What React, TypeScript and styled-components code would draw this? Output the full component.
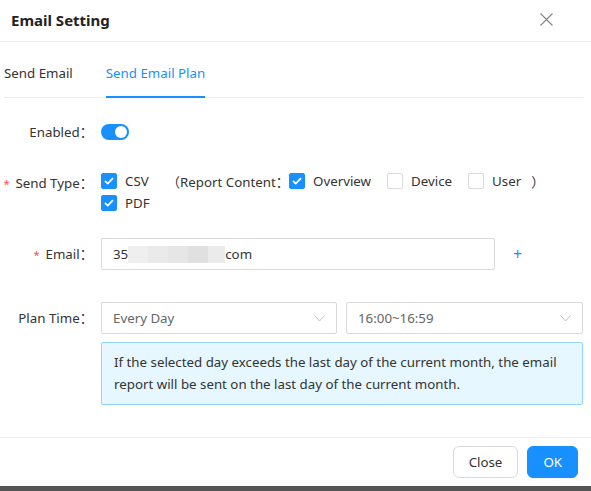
import React from "react";
import styled, { createGlobalStyle } from "styled-components";

const Global = createGlobalStyle`
  html, body { margin: 0; padding: 0; background: #fff; }
  body { font-family: "Noto Sans", "Noto Sans CJK SC", sans-serif; font-size: 13.3px; color: #333; }
  * { box-sizing: border-box; }
`;

const Modal = styled.div`
  width: 591px;
  height: 491px;
  display: flex;
  flex-direction: column;
  background: #fff;
  overflow: hidden;
`;

const Header = styled.div`
  height: 42px;
  flex: none;
  display: flex;
  align-items: center;
  justify-content: space-between;
  padding: 0 38px 2px 11px;
  border-bottom: 1px solid #eeeeee;
`;

const Title = styled.div`
  font-size: 15px;
  font-weight: 700;
  color: #222;
`;

const CloseX = styled.button`
  border: 0;
  background: none;
  padding: 0;
  width: 14px;
  height: 14px;
  display: flex;
  align-items: center;
  justify-content: center;
  cursor: pointer;
`;

const Body = styled.div`
  flex: 1;
  padding: 0 8px 0 4px;
`;

const TabBar = styled.div`
  height: 56px;
  display: flex;
  align-items: stretch;
  gap: 33px;
  border-bottom: 1px solid #eeeeee;
`;

const Tab = styled.div<{ $active?: boolean }>`
  display: flex;
  align-items: center;
  padding-top: 8px;
  font-size: 13.3px;
  color: ${(p) => (p.$active ? "#1890ff" : "#333")};
  border-bottom: 2px solid ${(p) => (p.$active ? "#1890ff" : "transparent")};
  margin-bottom: -1px;
`;

const Form = styled.div`
  display: flex;
  flex-direction: column;
  margin-left: -4px;
`;

const Row = styled.div<{ $top: number; $align?: string }>`
  display: grid;
  grid-template-columns: 93px 1fr;
  column-gap: 8px;
  margin-top: ${(p) => p.$top}px;
  align-items: ${(p) => p.$align || "center"};
`;

const Label = styled.div<{ $h?: number }>`
  text-align: right;
  color: #333;
  font-size: 13.3px;
  height: ${(p) => p.$h || 32}px;
  line-height: ${(p) => p.$h || 32}px;
  white-space: nowrap;
`;

const Req = styled.span`
  color: #ff4d4f;
  margin-right: 6px;
  font-size: 11px;
`;

const Switch = styled.div`
  width: 28px;
  height: 16px;
  border-radius: 8px;
  background: #1890ff;
  position: relative;
  &::after {
    content: "";
    position: absolute;
    top: 2px;
    right: 2px;
    width: 12px;
    height: 12px;
    border-radius: 50%;
    background: #fff;
  }
`;

const Lines = styled.div`
  display: flex;
  flex-direction: column;
`;

const Line = styled.div`
  display: flex;
  align-items: center;
  height: 22px;
`;

const CheckItem = styled.label<{ $gap?: number }>`
  display: flex;
  align-items: center;
  gap: 8px;
  margin-right: ${(p) => p.$gap ?? 0}px;
  color: #333;
  font-size: 13.3px;
`;

const Box = styled.span<{ $on?: boolean }>`
  width: 16px;
  height: 16px;
  border-radius: 2px;
  display: inline-flex;
  align-items: center;
  justify-content: center;
  background: ${(p) => (p.$on ? "#1890ff" : "#fff")};
  border: 1px solid ${(p) => (p.$on ? "#1890ff" : "#d9d9d9")};
`;

const Plain = styled.span<{ $gap?: number }>`
  margin-right: ${(p) => p.$gap ?? 0}px;
  color: #333;
`;

const InputWrap = styled.div`
  display: flex;
  align-items: center;
`;

const Input = styled.div`
  width: 394px;
  height: 32px;
  border: 1px solid #d9d9d9;
  border-radius: 2px;
  display: flex;
  align-items: center;
  padding: 0 11px;
  color: #333;
  font-size: 13.3px;
`;

const Blur = styled.span`
  display: inline-block;
  width: 97px;
  height: 17px;
  margin-top: 1px;
  background: linear-gradient(
    90deg,
    #efefef 0 20px,
    #eaeaea 20px 40px,
    #e6e6e6 40px 60px,
    #e0e0e0 60px 80px,
    #ebebeb 80px 97px
  );
`;

const Plus = styled.span`
  margin-left: 18px;
  color: #1890ff;
  font-size: 16px;
  line-height: 1;
`;

const Selects = styled.div`
  display: flex;
  gap: 9px;
`;

const Select = styled.div<{ $w: number }>`
  width: ${(p) => p.$w}px;
  height: 32px;
  border: 1px solid #d9d9d9;
  border-radius: 2px;
  display: flex;
  align-items: center;
  justify-content: space-between;
  padding: 0 11px;
  color: #666;
  font-size: 13.3px;
`;

const InfoRow = styled.div`
  margin: 8px 0 0 101px;
  width: 482px;
`;

const Info = styled.div`
  background: #e6f7ff;
  border: 1px solid #91d5ff;
  border-radius: 2px;
  padding: 8px 12px 9px 12px;
  font-size: 13.3px;
  line-height: 22px;
  color: #333;
`;

const Footer = styled.div`
  flex: none;
  height: 49px;
  border-top: 1px solid #eeeeee;
  display: flex;
  justify-content: flex-end;
  align-items: flex-start;
  padding: 8px 13px 0 0;
  gap: 9px;
`;

const Btn = styled.button<{ $primary?: boolean }>`
  height: 32px;
  padding: 0 15px;
  border-radius: 6px;
  font-family: inherit;
  font-size: 13.3px;
  cursor: pointer;
  border: 1px solid ${(p) => (p.$primary ? "#1890ff" : "#d9d9d9")};
  background: ${(p) => (p.$primary ? "#1890ff" : "#fff")};
  color: ${(p) => (p.$primary ? "#fff" : "#333")};
`;

const BottomBar = styled.div`
  flex: none;
  height: 5px;
  background: #555555;
`;

const Check = () => (
  <svg width="10" height="8" viewBox="0 0 10 8">
    <path d="M1 4 L3.8 6.6 L9 1.2" fill="none" stroke="#fff" strokeWidth="1.8" />
  </svg>
);

const Chevron = () => (
  <svg width="11" height="7" viewBox="0 0 11 7">
    <path d="M0.5 0.5 L5.5 6 L10.5 0.5" fill="none" stroke="#bfbfbf" strokeWidth="1" />
  </svg>
);

const CB = ({ on }: { on?: boolean }) => <Box $on={on}>{on && <Check />}</Box>;

export default function App() {
  return (
    <>
      <Global />
      <Modal>
        <Header>
          <Title>Email Setting</Title>
          <CloseX aria-label="close">
            <svg width="13" height="13" viewBox="0 0 13 13">
              <path d="M0.5 0.5 L12.5 12.5 M12.5 0.5 L0.5 12.5" stroke="#888" strokeWidth="1.2" />
            </svg>
          </CloseX>
        </Header>
        <Body>
          <TabBar>
            <Tab>Send Email</Tab>
            <Tab $active>Send Email Plan</Tab>
          </TabBar>
          <Form>
            <Row $top={18}>
              <Label>Enabled：</Label>
              <div>
                <Switch />
              </div>
            </Row>
            <Row $top={22} $align="start">
              <Label $h={26}>
                <Req>*</Req>Send Type：
              </Label>
              <Lines>
                <Line>
                  <CheckItem $gap={18}>
                    <CB on />
                    CSV
                  </CheckItem>
                  <Plain>（Report Content：</Plain>
                  <CheckItem $gap={16}>
                    <CB on />
                    Overview
                  </CheckItem>
                  <CheckItem $gap={16}>
                    <CB />
                    Device
                  </CheckItem>
                  <CheckItem $gap={10}>
                    <CB />
                    User
                  </CheckItem>
                  <Plain>）</Plain>
                </Line>
                <Line>
                  <CheckItem>
                    <CB on />
                    PDF
                  </CheckItem>
                </Line>
              </Lines>
            </Row>
            <Row $top={24}>
              <Label>
                <Req>*</Req>Email：
              </Label>
              <InputWrap>
                <Input>
                  35<Blur />com
                </Input>
                <Plus>+</Plus>
              </InputWrap>
            </Row>
            <Row $top={32}>
              <Label>Plan Time：</Label>
              <Selects>
                <Select $w={236}>
                  Every Day
                  <Chevron />
                </Select>
                <Select $w={237}>
                  16:00~16:59
                  <Chevron />
                </Select>
              </Selects>
            </Row>
            <InfoRow>
              <Info>
                If the selected day exceeds the last day of the current month, the email report will be sent on the
                last day of the current month.
              </Info>
            </InfoRow>
          </Form>
        </Body>
        <Footer>
          <Btn>Close</Btn>
          <Btn $primary>OK</Btn>
        </Footer>
        <BottomBar />
      </Modal>
    </>
  );
}
